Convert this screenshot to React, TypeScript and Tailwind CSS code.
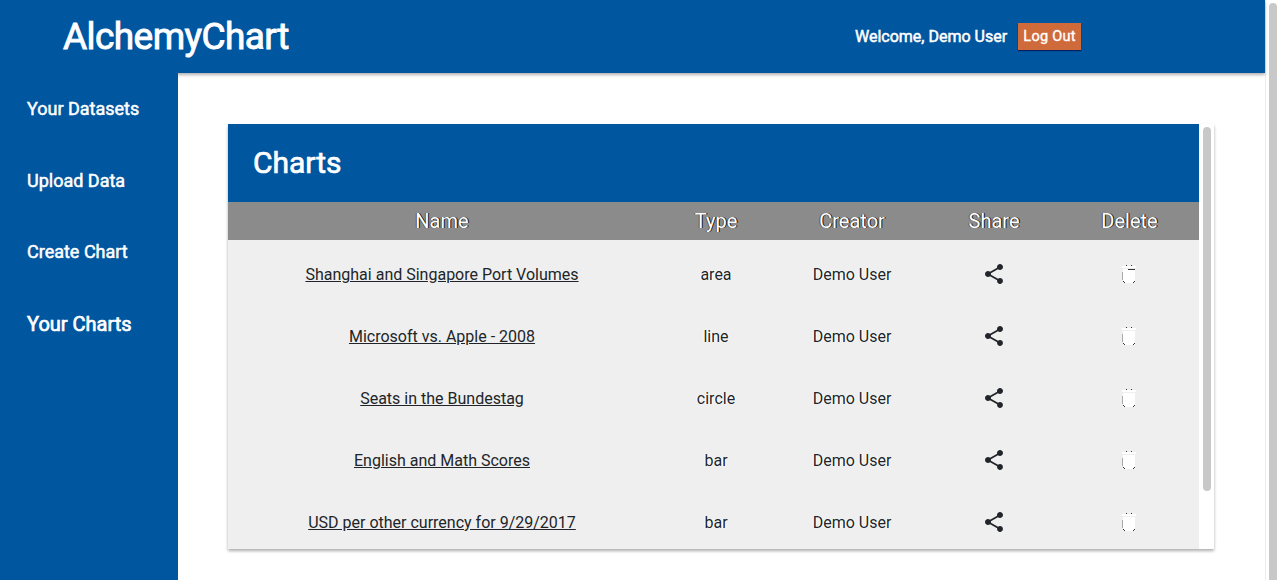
import React from "react";

const charts = [
  { name: "Shanghai and Singapore Port Volumes", type: "area" },
  { name: "Microsoft vs. Apple - 2008", type: "line" },
  { name: "Seats in the Bundestag", type: "circle" },
  { name: "English and Math Scores", type: "bar" },
  { name: "USD per other currency for 9/29/2017", type: "bar" },
];

const columns = "grid grid-cols-[428px_120px_152px_132px_139px] items-center justify-items-center";

function ShareIcon() {
  return (
    <svg width="24" height="24" viewBox="0 0 24 24" fill="#212529" className="mr-px">
      <path d="M18 16.08c-.76 0-1.44.3-1.96.77L8.91 12.7c.05-.23.09-.46.09-.7s-.04-.47-.09-.7l7.05-4.11c.54.5 1.25.81 2.04.81 1.66 0 3-1.34 3-3s-1.34-3-3-3-3 1.34-3 3c0 .24.04.47.09.7L8.04 9.81C7.5 9.31 6.79 9 6 9c-1.66 0-3 1.34-3 3s1.34 3 3 3c.79 0 1.5-.31 2.04-.81l7.12 4.16c-.05.21-.08.43-.08.65 0 1.61 1.31 2.92 2.92 2.92 1.61 0 2.92-1.31 2.92-2.92s-1.31-2.92-2.92-2.92z" />
    </svg>
  );
}

function DeleteIcon({ seam }: { seam: boolean }) {
  return (
    <svg width="24" height="24" viewBox="0 0 24 24" shapeRendering="crispEdges" className="mr-px">
      <path fill="#fff" d="M6 7h12v14H6zM5 4h14v2H5z" />
      <path fill="#333" d="M9 3h1v1H9zM14 3h1v1h-1zM6 19h1v1H6zM7 20h1v1H7zM17 19h1v1h-1zM16 20h1v1h-1z" />
      <path fill="#aaa" d="M5 10h1v8H5z" />
      {seam && <path fill="#333" d="M11 7h7v1h-7z" />}
    </svg>
  );
}

export default function App() {
  return (
    <div className="flex h-[580px] w-[1280px] overflow-hidden bg-white font-[Roboto,sans-serif] text-base text-[#212529]">
      <div className="flex w-[1265px] flex-col">
        <header className="relative flex h-[73px] shrink-0 items-center bg-[#0156a0] pl-[63px] text-white shadow-[0_2px_3px_rgba(0,0,0,0.3)]">
          <h1 className="w-[792px] text-[37px] leading-none tracking-[-0.57px] [-webkit-text-stroke:0.9px_white]">AlchemyChart</h1>
          <span className="w-[163px] whitespace-nowrap [-webkit-text-stroke:0.5px_white]">Welcome, Demo User</span>
          <button className="h-[27px] w-[63px] whitespace-nowrap bg-[#cf6a3a] pt-px text-[14.5px] tracking-[0.25px] shadow-[0_1px_1px_#00205f] [-webkit-text-stroke:0.4px_white]">Log Out</button>
        </header>
        <div className="flex min-h-0 flex-1">
          <nav className="relative flex w-[178px] shrink-0 flex-col bg-[#0156a0] pl-[27px] text-[18px] text-white [-webkit-text-stroke:0.5px_white]">
            <a className="flex h-[71px] items-center">Your Datasets</a>
            <a className="flex h-[72px] items-center">Upload Data</a>
            <a className="flex h-[71px] items-center">Create Chart</a>
            <a className="flex h-[74px] items-center text-[20px] [-webkit-text-stroke:0.7px_white]">Your Charts</a>
          </nav>
          <main className="flex-1 pl-[50px] pt-[51px]">
            <section className="flex h-[425px] w-[986px] overflow-hidden bg-white shadow-[0_2px_3px_rgba(0,0,0,0.32)]">
              <div className="w-[971px] bg-[#efefef]">
                <div className="flex h-[78px] items-center bg-[#0156a0] pb-[2px] pl-[25px] text-[30px] text-white [-webkit-text-stroke:0.7px_white]">
                  Charts
                </div>
                <div className={columns + " h-[38px] bg-[#8b8b8b] text-[20px] text-white [text-shadow:1px_0_0_#111,-1px_0_0_#555]"}>
                  <span>Name</span>
                  <span>Type</span>
                  <span>Creator</span>
                  <span>Share</span>
                  <span>Delete</span>
                </div>
                <div className="pt-[3px]">
                  {charts.map((chart, index) => (
                    <div key={chart.name} className={columns + " h-[62px]"}>
                      <a className="pt-[2px] underline">{chart.name}</a>
                      <span className="pt-[2px] [text-shadow:-1px_0_0_white,1px_0_0_white]">{chart.type}</span>
                      <span className="pt-[2px] [text-shadow:-1px_0_0_white,1px_0_0_white]">Demo User</span>
                      <ShareIcon />
                      <DeleteIcon seam={index === 0} />
                    </div>
                  ))}
                </div>
              </div>
              <div className="w-[15px] pl-1 pt-[3px]">
                <div className="h-[364px] w-2 rounded-full bg-[#c8c8c8]" />
              </div>
            </section>
          </main>
        </div>
      </div>
      <div className="flex w-[15px] border-l border-[#ededed] pl-[3px] pt-[3px]">
        <div className="h-[640px] w-2 shrink-0 rounded-full bg-[#c8c8c8]" />
      </div>
    </div>
  );
}
